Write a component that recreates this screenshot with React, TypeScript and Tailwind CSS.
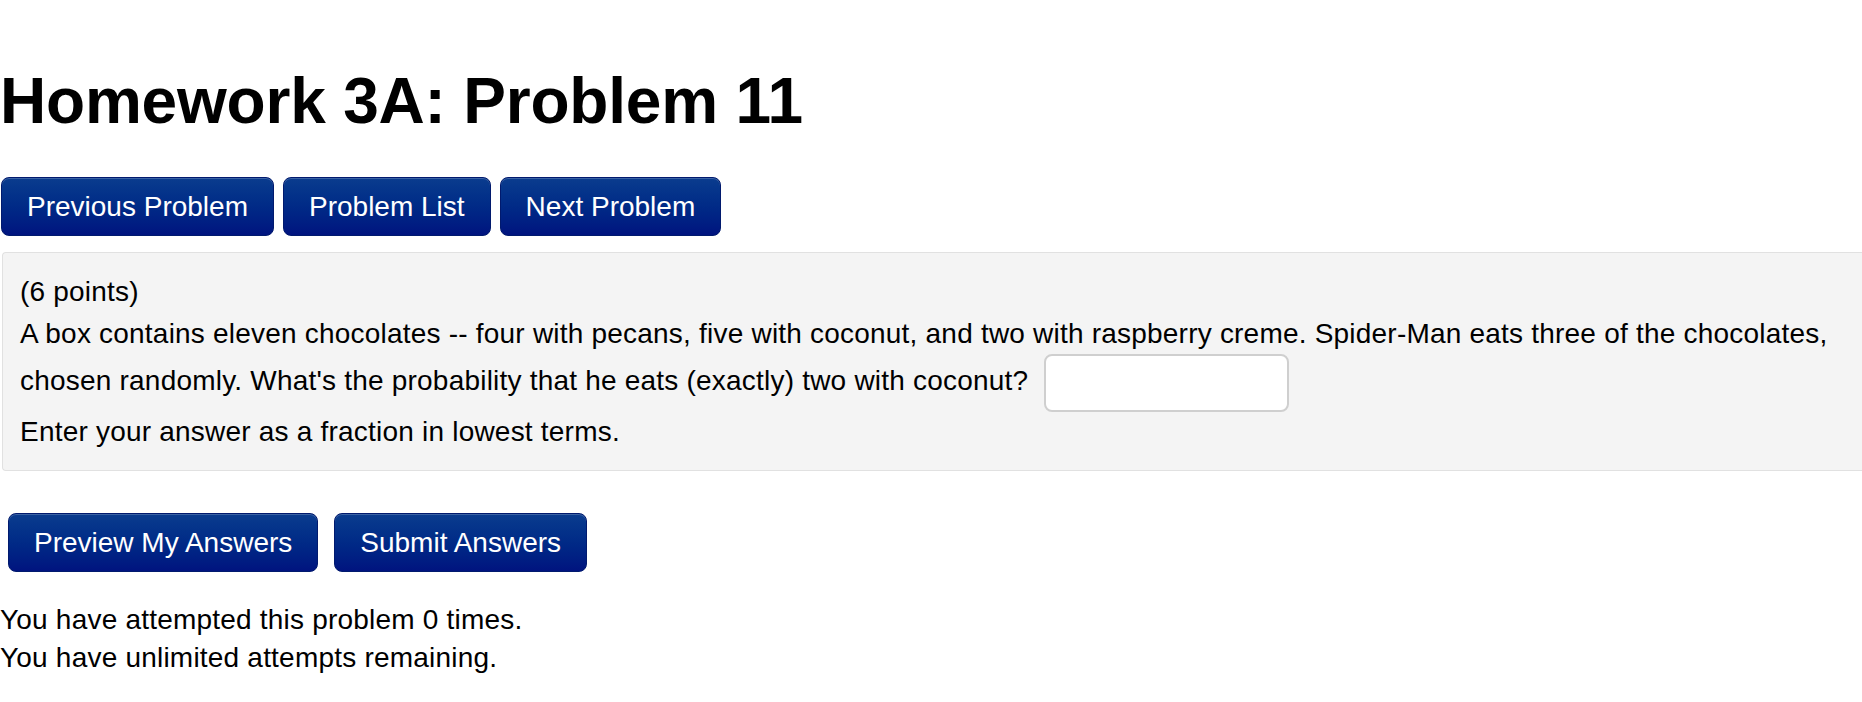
import React from "react";

function NavButton({ children }: { children: React.ReactNode }) {
  return (
    <button
      type="button"
      className="h-[59px] px-[25px] flex items-center rounded-[8px] border border-[#011a6e] bg-gradient-to-b from-[#0b3c8e] to-[#00137f] text-white text-[28px] leading-[40px] shadow-[inset_0_1px_0_rgba(255,255,255,0.2)] whitespace-nowrap"
    >
      {children}
    </button>
  );
}

export default function App() {
  return (
    <div
      className="w-[1862px] h-[702px] bg-white text-black overflow-hidden"
      style={{ fontFamily: '"Liberation Sans", Arial, Helvetica, sans-serif' }}
    >
      <h1 className="pt-[61px] text-[64px] leading-[80px] font-bold tracking-[-0.2px]">
        Homework 3A: Problem 11
      </h1>

      <div className="mt-[36px] ml-[1px] flex gap-[9px]">
        <NavButton>Previous Problem</NavButton>
        <NavButton>Problem List</NavButton>
        <NavButton>Next Problem</NavButton>
      </div>

      <div className="mt-[16px] ml-[2px] rounded-l-[4px] border border-r-0 border-[#e1e1e1] bg-[#f4f4f4] pt-[19px] pb-[18px] pl-[17px] text-[28px] leading-[40px] tracking-[0.21px]">
        <div className="mb-[2px]">(6 points)</div>
        <div>
          A box contains eleven chocolates -- four with pecans, five with coconut, and two with raspberry creme. Spider-Man
          eats three of the chocolates, chosen randomly. What's the probability that he eats (exactly) two with coconut?{" "}
          <input
            type="text"
            aria-label="answer"
            className="ml-[8px] align-middle w-[245px] h-[58px] rounded-[8px] border-2 border-[#cfcfcf] bg-white outline-none"
          />
        </div>
        <div>Enter your answer as a fraction in lowest terms.</div>
      </div>

      <div className="mt-[42px] ml-[8px] flex gap-[16px]">
        <NavButton>Preview My Answers</NavButton>
        <NavButton>Submit Answers</NavButton>
      </div>

      <div className="mt-[29px] text-[28px] leading-[38px] tracking-[0.21px]">
        <div>You have attempted this problem 0 times.</div>
        <div>You have unlimited attempts remaining.</div>
      </div>
    </div>
  );
}
